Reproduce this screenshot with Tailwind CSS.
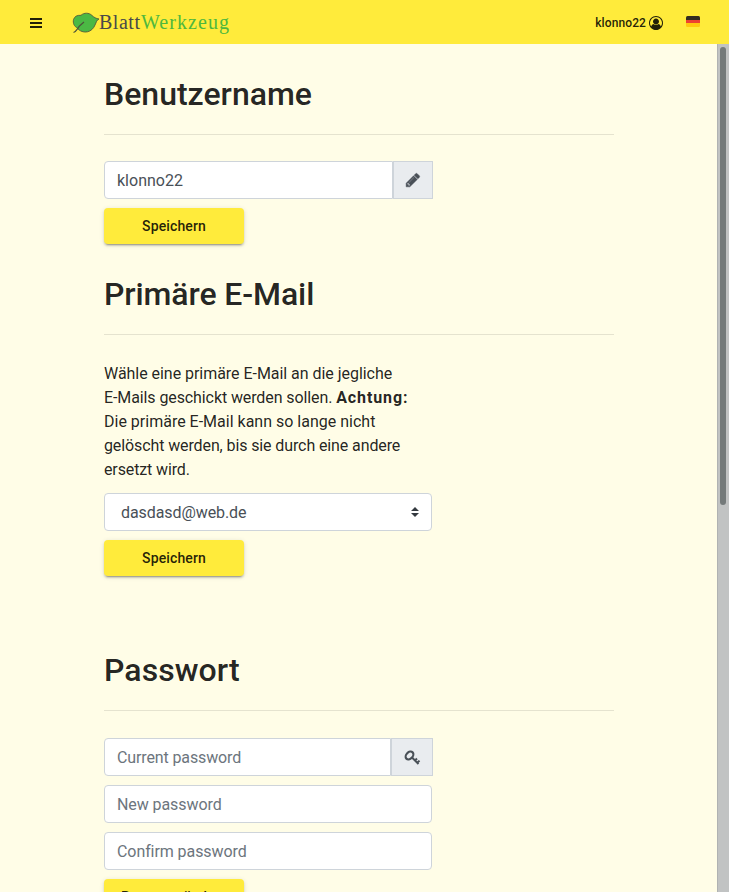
<!DOCTYPE html>
<html lang="de">
<head>
<meta charset="utf-8">
<title>BlattWerkzeug</title>
<script src="https://cdn.jsdelivr.net/npm/@tailwindcss/browser@4"></script>
</head>
<body class="flex h-screen flex-col overflow-hidden bg-[#fffde7] font-['Roboto',sans-serif] text-base text-black/87">
<header class="flex h-11 shrink-0 items-center bg-[#ffeb3b] pl-[30px] pr-[29px]">
  <button aria-label="Menü" class="flex w-3 flex-col gap-0.5 pt-0.5"><span class="h-0.5 bg-black/87"></span><span class="h-0.5 bg-black/87"></span><span class="h-0.5 bg-black/87"></span></button>
  <svg class="ml-[30px] h-8 w-[162px]" viewBox="0 0 162 32">
    <path d="M5.500 22C2 20.500 .8 17 1.500 13.500C2.500 10.500 5 9 9 9.300C12 6.500 17 6.500 20 9.500C22 11.300 24 12.600 27 13C24.500 14 24.500 16 23 19C20 26.500 12 28 6.500 23.500Z" fill="#4bb944" stroke="#555b3a" stroke-width=".9"/>
    <path d="M1.500 26.500C4 26 5 23 7.500 20L12 16" stroke="#4d553a" stroke-width="1.200" fill="none"/>
    <text y="23" font-family="Liberation Serif, serif" font-size="20"><tspan x="27" fill="#494949" textLength="41">Blatt</tspan><tspan x="69" fill="#4fb83e" textLength="88">Werkzeug</tspan></text>
  </svg>
  <div class="ml-auto flex items-center text-xs font-medium"><span class="pt-0.5 tracking-[.1px]">klonno22</span>
    <svg class="mt-0.5 ml-[3px] size-3.5" viewBox="0 0 1792 1792" fill="currentColor"><path d="M896 0q182 0 348 71t286 191 191 286 71 348q0 181-70.500 347t-190.500 286-286 191.500-349 71.500-349-71-285.500-191.500-190.500-286-71-347.500 71-348 191-286 286-191 348-71zm619 1351q149-205 149-455 0-156-61-298t-164-245-245-164-298-61-298 61-245 164-164 245-61 298q0 250 149 455 66-327 306-327 131 128 313 128t313-128q240 0 306 327zm-235-647q0-159-112.500-271.500t-271.500-112.500-271.500 112.500-112.500 271.500 112.500 271.500 271.500 112.500 271.500-112.500 112.500-271.500z"/></svg>
    <span class="mb-px ml-[23px] flex h-[11px] w-3.5 flex-col overflow-hidden rounded-[1.5px]"><i class="h-1 bg-[#332c20]"></i><i class="h-[3px] bg-[#ed4131]"></i><i class="h-1 bg-[#ffc90e]"></i></span>
  </div>
</header>
<div class="flex min-h-0 flex-1">
  <main class="min-w-0 flex-1 overflow-hidden pl-[104px]">
    <section class="h-[200px] w-[510px] pt-[31px]">
      <h2 class="text-[32px] leading-[38px] font-medium">Benutzername</h2>
      <hr class="mt-[21px] border-black/10">
      <div class="mt-[26px] flex h-[38px] w-[329px]">
        <input aria-label="Benutzername" value="klonno22" class="min-w-0 flex-1 rounded-l border border-[#ced4da] bg-white px-3 pt-0.5 text-[#495057]">
        <span class="flex w-10 items-center justify-center border border-[#ced4da] bg-[#e9ecef] text-[#495057]"><svg class="size-4" viewBox="0 0 1792 1792" fill="currentColor" stroke="currentColor" stroke-width="50"><path d="M491 1536l91-91-235-235-91 91v107h128v128h107zm523-928q0-22-22-22-10 0-17 7l-542 542q-7 7-7 17 0 22 22 22 10 0 17-7l542-542q7-7 7-17zm-54-192l416 416-832 832h-416v-416zm683 96q0 53-37 90l-166 166-416-416 166-165q36-38 90-38 53 0 91 38l235 234q37 39 37 91z"/></svg></span>
      </div>
      <button class="mt-[9px] block h-9 w-[140px] rounded bg-[#ffeb3b] text-sm font-medium tracking-[.13px] shadow-[0_3px_1px_-2px_#0003,0_2px_2px_0_#00000024,0_1px_5px_0_#0000001f]">Speichern</button>
    </section>
    <section class="h-[376px] w-[510px] pt-[31px]">
      <h2 class="text-[32px] leading-[38px] font-medium tracking-[-.1px]">Primäre E-Mail</h2>
      <hr class="mt-[21px] border-black/10">
      <p class="mt-[27px] w-[328px] leading-6 whitespace-nowrap"><span class="tracking-[-.04px]">Wähle eine primäre E-Mail an die jegliche</span><br><span class="tracking-[-.1px]">E-Mails geschickt werden sollen. </span><b class="font-bold tracking-[.9px]">Achtung:</b><br>Die primäre E-Mail kann so lange nicht<br><span class="tracking-[-.11px]">gelöscht werden, bis sie durch eine andere</span><br><span class="tracking-[-.13px]">ersetzt wird.</span></p>
      <div class="mt-[11px] flex h-[38px] w-[328px] items-center justify-between rounded border border-[#ced4da] bg-white pr-3 pl-4 text-[#495057]"><span class="pt-0.5 tracking-[-.08px]">dasdasd@web.de</span><svg class="h-2.5 w-2" viewBox="0 0 4 5"><path fill="#343a40" d="M2 0 0 2h4zm0 5L0 3h4z"/></svg></div>
      <button class="mt-[9px] block h-9 w-[140px] rounded bg-[#ffeb3b] text-sm font-medium tracking-[.13px] shadow-[0_3px_1px_-2px_#0003,0_2px_2px_0_#00000024,0_1px_5px_0_#0000001f]">Speichern</button>
    </section>
    <section class="w-[510px] pt-[31px]">
      <h2 class="text-[32px] leading-[38px] font-medium tracking-[.08px]">Passwort</h2>
      <hr class="mt-[21px] border-black/10">
      <div class="mt-[27px] flex h-[38px] w-[329px]">
        <input placeholder="Current password" class="min-w-0 flex-1 rounded-l border border-[#ced4da] bg-white px-3 pt-0.5 tracking-[-.12px] placeholder:text-[#6c757d]">
        <span class="flex w-[42px] items-center justify-center border border-[#ced4da] bg-[#e9ecef] text-[#495057]"><svg class="mt-0.5 h-4 w-[17px]" viewBox="0 0 17 16" fill="none" stroke="currentColor"><ellipse cx="5.500" cy="5.500" rx="4.400" ry="3.200" transform="rotate(-45 5.500 5.500)" stroke-width="2.200"/><path d="m8 7.500 6.500 6.500M11 10.500l2-2M13.300 12.800l2.200-2.200" stroke-width="2"/></svg></span>
      </div>
      <input placeholder="New password" class="mt-[9px] block h-[38px] w-[328px] rounded border border-[#ced4da] bg-white px-3 tracking-[-.08px] placeholder:text-[#6c757d]">
      <input placeholder="Confirm password" class="mt-[9px] block h-[38px] w-[328px] rounded border border-[#ced4da] bg-white px-3 tracking-[-.08px] placeholder:text-[#6c757d]">
      <button class="mt-[9px] block h-9 w-[140px] rounded bg-[#ffeb3b] text-sm font-medium shadow-[0_3px_1px_-2px_#0003,0_2px_2px_0_#00000024,0_1px_5px_0_#0000001f]">Passwort ändern</button>
    </section>
  </main>
  <div class="flex w-3 justify-center border-l border-[#b0b2b2] bg-[#c1c3c3] pt-[3px]"><div class="mr-px h-[458px] w-1.5 rounded-full bg-[#747a7a]"></div></div>
</div>
</body>
</html>
